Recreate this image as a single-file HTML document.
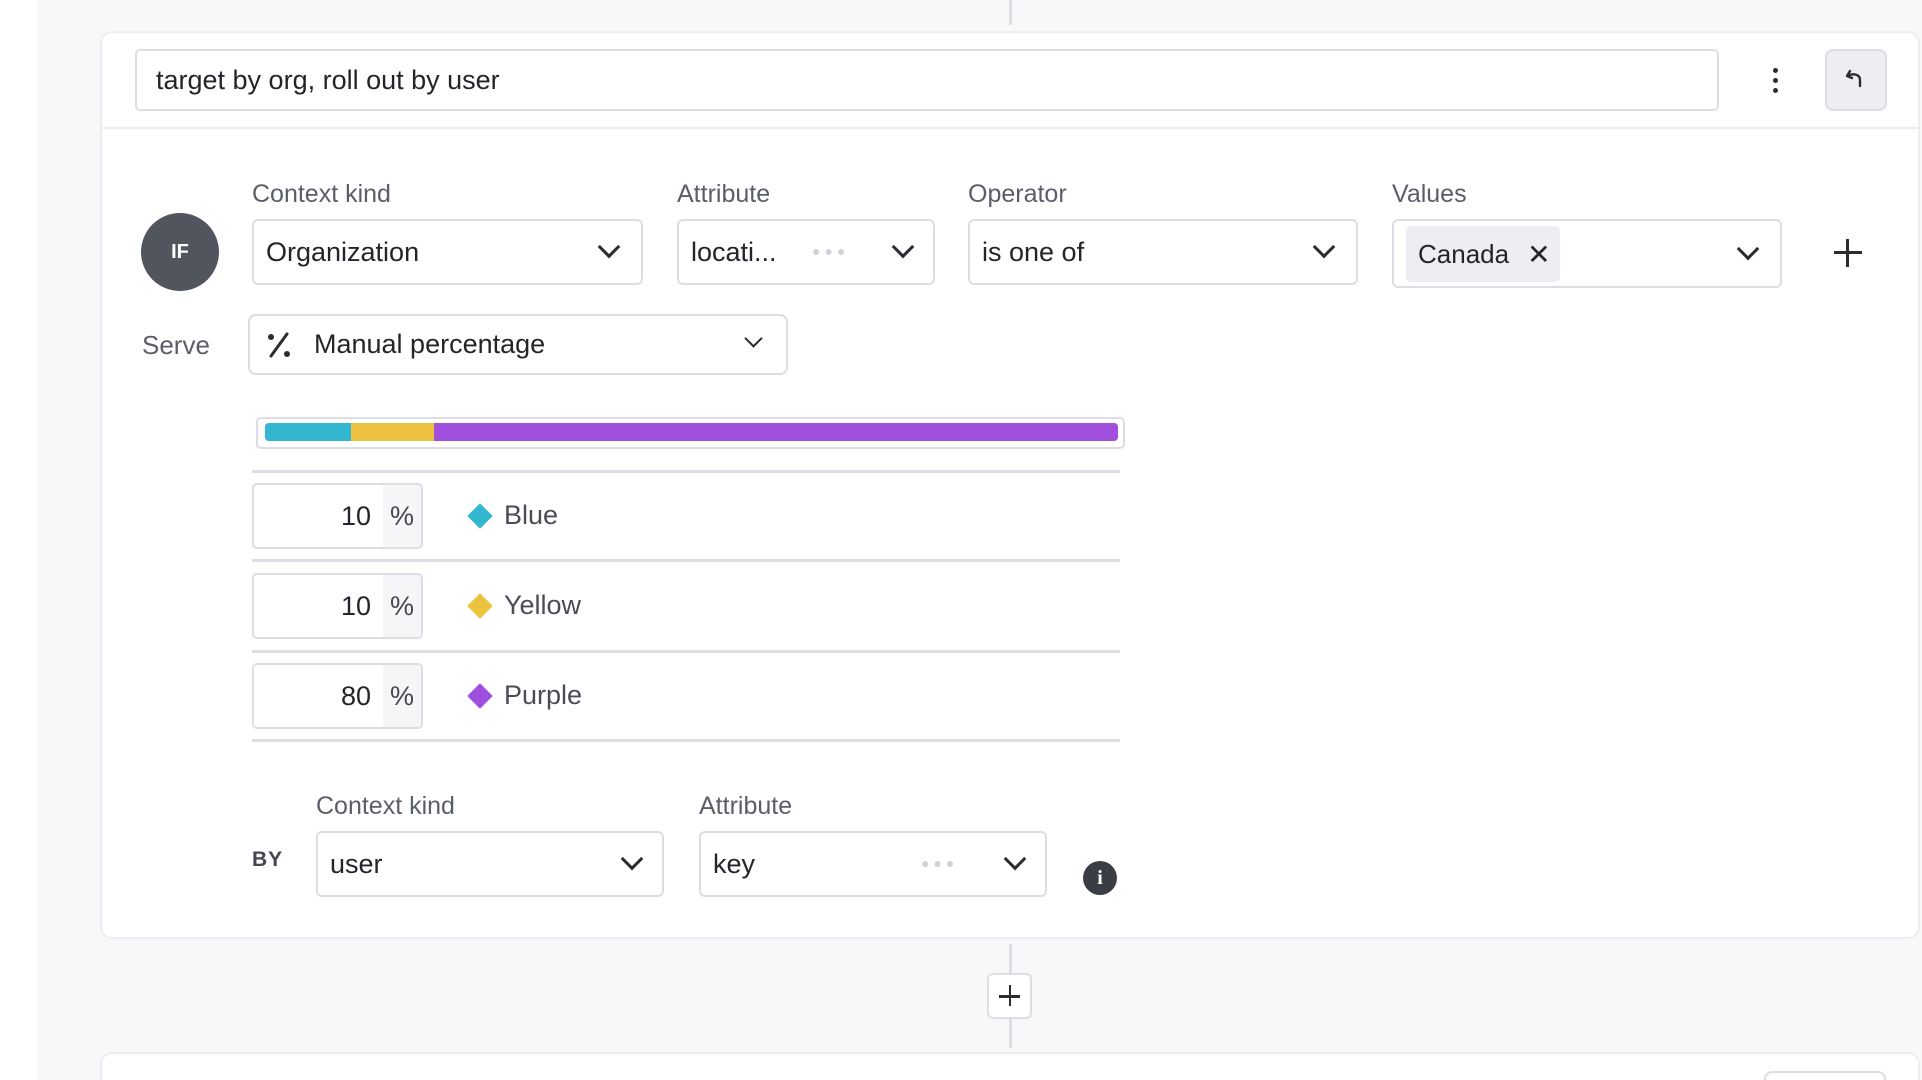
<!DOCTYPE html>
<html><head><meta charset="utf-8"><style>
*{box-sizing:border-box;margin:0;padding:0}
html{width:1922px;height:1080px;overflow:hidden}
body{width:1922px;height:1080px;overflow:hidden;background:#f7f8fa;font-family:"Liberation Sans",sans-serif;color:#23252a;position:relative}
.abs{position:absolute}
.left{left:0;top:0;width:37px;height:1080px;background:#fff}
.card{left:100px;top:31px;width:1820px;height:908px;background:#fff;border:2px solid #eceef1;border-radius:12px}
.card2{left:100px;top:1052px;width:1820px;height:28px;background:#fff;border:2px solid #eceef1;border-bottom:none;border-radius:12px 12px 0 0}
.input{border:2px solid #dcdee3;border-radius:5px;background:#fff}
.sel{border:2px solid #dcdee3;border-radius:6px;background:#fff;font-size:27px;display:flex;align-items:center;padding-left:12px}
.lbl{font-size:25px;color:#5a5e68}
.chev{position:absolute;width:16px;height:16px;border-right:3px solid #2a2c31;border-bottom:3px solid #2a2c31;transform:rotate(45deg)}
.dots{position:absolute;color:#cfd2d8;font-size:14px;letter-spacing:4px}
.div{position:absolute;left:252px;width:868px;height:3px;background:#dcdee3}
.num{position:absolute;left:252px;width:171px;height:66px;border:2px solid #dcdee3;border-radius:5px;overflow:hidden;background:#fff}
.num .p{position:absolute;right:0;top:0;width:38px;height:100%;background:#f5f6f8;font-size:27px;display:flex;align-items:center;justify-content:center;color:#44474f}
.num .v{position:absolute;right:50px;top:0;height:100%;display:flex;align-items:center;font-size:27px}
.dia{position:absolute;width:18px;height:18px;transform:rotate(45deg);left:471px}
.vl{position:absolute;left:504px;font-size:27px;color:#4a4d55}
</style></head><body>
<div class="abs left"></div>
<div class="abs" style="left:1009px;top:0;width:3px;height:25px;background:#dcdee3"></div>
<div class="abs card"></div>
<div class="abs card2"></div>
<div class="abs input" style="left:135px;top:49px;width:1584px;height:62px"></div>
<div class="abs" style="left:156px;top:65px;font-size:27px">target by org, roll out by user</div>
<div class="abs" style="left:1773px;top:68px;width:5px;height:5px;border-radius:50%;background:#2a2c31;box-shadow:0 10px 0 #2a2c31,0 20px 0 #2a2c31"></div>
<div class="abs" style="left:1825px;top:49px;width:62px;height:62px;background:#eceef1;border:2px solid #dcdee3;border-radius:8px"></div>
<svg class="abs" style="left:1843px;top:66px" width="26" height="26" viewBox="0 0 26 26"><path d="M7 5 L4 10 L9 12 M4 10 C10 7 17 8 17 14 L17 20" fill="none" stroke="#2a2c31" stroke-width="2.4" stroke-linecap="round" stroke-linejoin="round"/></svg>
<div class="abs" style="left:102px;top:127px;width:1818px;height:2px;background:#eceef1"></div>

<div class="abs" style="left:141px;top:213px;width:78px;height:78px;border-radius:50%;background:#51555e;color:#fff;font-size:20px;font-weight:bold;display:flex;align-items:center;justify-content:center">IF</div>
<div class="abs lbl" style="left:252px;top:180px">Context kind</div>
<div class="abs lbl" style="left:677px;top:180px">Attribute</div>
<div class="abs lbl" style="left:968px;top:180px">Operator</div>
<div class="abs lbl" style="left:1392px;top:180px">Values</div>
<div class="abs sel" style="left:252px;top:219px;width:391px;height:66px">Organization<span class="chev" style="right:24px;top:18px"></span></div>
<div class="abs sel" style="left:677px;top:219px;width:258px;height:66px">locati...<span class="dots" style="left:133px;top:22px">●●●</span><span class="chev" style="right:22px;top:18px"></span></div>
<div class="abs sel" style="left:968px;top:219px;width:390px;height:66px">is one of<span class="chev" style="right:24px;top:18px"></span></div>
<div class="abs sel" style="left:1392px;top:219px;width:390px;height:69px;padding-left:0"><span class="chev" style="right:24px;top:20px"></span></div>
<div class="abs" style="left:1406px;top:226px;width:154px;height:56px;background:#eceef1;border-radius:5px;font-size:26px;display:flex;align-items:center;padding-left:12px">Canada<span style="margin-left:18px;font-size:28px">✕</span></div>
<div class="abs" style="left:1834px;top:251px;width:28px;height:3px;background:#2a2c31"></div>
<div class="abs" style="left:1846px;top:239px;width:3px;height:28px;background:#2a2c31"></div>

<div class="abs lbl" style="left:142px;top:330px;font-size:26px">Serve</div>
<div class="abs sel" style="left:248px;top:314px;width:540px;height:61px;padding-left:14px;border-radius:8px">
<svg width="30" height="30" viewBox="0 0 30 30" style="margin-right:20px"><path d="M23 4 L7 26" stroke="#2a2c31" stroke-width="3" stroke-linecap="round"/><circle cx="7" cy="7" r="3" fill="#2a2c31"/><circle cx="23" cy="24" r="3" fill="#2a2c31"/></svg>Manual percentage<span class="chev" style="right:26px;top:16px;width:13px;height:13px;border-width:2.5px"></span></div>

<div class="abs" style="left:256px;top:417px;width:869px;height:32px;border:2px solid #dcdee3;border-radius:5px;background:#fff"></div>
<div class="abs" style="left:265px;top:423px;width:853px;height:18px;border-radius:4px;overflow:hidden;background:#a050dc">
<div class="abs" style="left:0;top:0;width:86px;height:18px;background:#33b6cf"></div>
<div class="abs" style="left:86px;top:0;width:83px;height:18px;background:#ecc340"></div></div>

<div class="div" style="top:470px"></div>
<div class="div" style="top:559px"></div>
<div class="div" style="top:650px"></div>
<div class="div" style="top:739px"></div>
<div class="num" style="top:483px"><span class="v">10</span><span class="p">%</span></div>
<div class="num" style="top:573px"><span class="v">10</span><span class="p">%</span></div>
<div class="num" style="top:663px"><span class="v">80</span><span class="p">%</span></div>
<div class="dia" style="top:507px;background:#33b6cf"></div>
<div class="dia" style="top:597px;background:#ecc340"></div>
<div class="dia" style="top:687px;background:#a050dc"></div>
<div class="vl" style="top:500px">Blue</div>
<div class="vl" style="top:590px">Yellow</div>
<div class="vl" style="top:680px">Purple</div>

<div class="abs lbl" style="left:316px;top:792px">Context kind</div>
<div class="abs lbl" style="left:699px;top:792px">Attribute</div>
<div class="abs" style="left:252px;top:848px;font-size:21px;font-weight:bold;color:#44474f;letter-spacing:1px">BY</div>
<div class="abs sel" style="left:316px;top:831px;width:348px;height:66px">user<span class="chev" style="right:22px;top:18px"></span></div>
<div class="abs sel" style="left:699px;top:831px;width:348px;height:66px">key<span class="dots" style="left:220px;top:22px">●●●</span><span class="chev" style="right:22px;top:18px"></span></div>
<div class="abs" style="left:1083px;top:861px;width:34px;height:34px;border-radius:50%;background:#3a3d44;color:#fff;font-size:20px;font-weight:bold;font-family:'Liberation Serif',serif;display:flex;align-items:center;justify-content:center">i</div>

<div class="abs" style="left:1009px;top:944px;width:3px;height:104px;background:#dcdee3"></div>
<div class="abs" style="left:987px;top:973px;width:45px;height:46px;background:#fff;border:2px solid #dcdee3;border-radius:6px"></div>
<div class="abs" style="left:999px;top:995px;width:21px;height:2.5px;background:#2a2c31"></div>
<div class="abs" style="left:1008.5px;top:985px;width:2.5px;height:21px;background:#2a2c31"></div>
<div class="abs" style="left:1764px;top:1071px;width:122px;height:20px;border:2px solid #dcdee3;border-radius:8px;background:#fff"></div>
</body></html>
